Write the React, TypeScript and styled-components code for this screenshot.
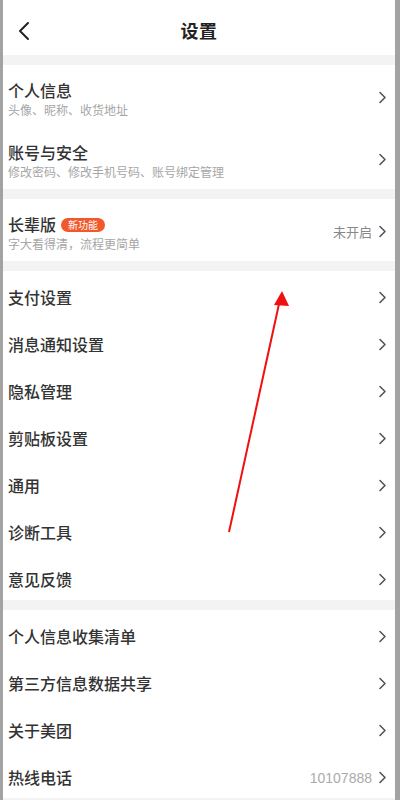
import React from 'react';
import styled, { createGlobalStyle } from 'styled-components';

const GlobalStyle = createGlobalStyle`
  html, body {
    margin: 0;
    padding: 0;
    background: #ffffff;
  }
  body {
    font-family: "Noto Sans CJK SC", "Noto Sans", "Liberation Sans", sans-serif;
    -webkit-font-smoothing: antialiased;
  }
`;

type Item = {
  title: string;
  sub?: string;
  value?: string;
  badge?: string;
};

const accountItems: Item[] = [
  { title: '个人信息', sub: '头像、昵称、收货地址' },
  { title: '账号与安全', sub: '修改密码、修改手机号码、账号绑定管理' },
];

const elderItems: Item[] = [
  { title: '长辈版', sub: '字大看得清，流程更简单', value: '未开启', badge: '新功能' },
];

const settingItems: Item[] = [
  { title: '支付设置' },
  { title: '消息通知设置' },
  { title: '隐私管理' },
  { title: '剪贴板设置' },
  { title: '通用' },
  { title: '诊断工具' },
  { title: '意见反馈' },
];

const aboutItems: Item[] = [
  { title: '个人信息收集清单' },
  { title: '第三方信息数据共享' },
  { title: '关于美团' },
  { title: '热线电话', value: '10107888' },
];

const Chevron: React.FC = () => (
  <svg width="9" height="13" viewBox="0 0 9 13" fill="none">
    <path d="M2 1.5L7 6.5L2 11.5" stroke="#555" strokeWidth="1.6" strokeLinecap="round" strokeLinejoin="round" />
  </svg>
);

const BackIcon: React.FC = () => (
  <svg width="14" height="20" viewBox="0 0 14 20" fill="none">
    <path d="M11 2L3 10L11 18" stroke="#222" strokeWidth="2" strokeLinecap="round" strokeLinejoin="round" />
  </svg>
);

const Row: React.FC<{ item: Item }> = ({ item }) => {
  const tall = !!item.sub;
  return (
    <RowBox $tall={tall}>
      <RowText $tall={tall}>
        <TitleLine>
          <RowTitle>{item.title}</RowTitle>
          {item.badge && <Badge>{item.badge}</Badge>}
        </TitleLine>
        {item.sub && <RowSub>{item.sub}</RowSub>}
      </RowText>
      <RowRight $tall={tall}>
        {item.value && <RowValue $digits={/^\d+$/.test(item.value)}>{item.value}</RowValue>}
        <Chevron />
      </RowRight>
    </RowBox>
  );
};

const App: React.FC = () => {
  return (
    <>
      <GlobalStyle />
      <Screen>
        <Header>
          <BackButton>
            <BackIcon />
          </BackButton>
          <HeaderTitle>设置</HeaderTitle>
        </Header>
        <Section>
          {accountItems.map((it) => (
            <Row key={it.title} item={it} />
          ))}
        </Section>
        <Section>
          {elderItems.map((it) => (
            <Row key={it.title} item={it} />
          ))}
        </Section>
        <Section>
          {settingItems.map((it) => (
            <Row key={it.title} item={it} />
          ))}
        </Section>
        <Section>
          {aboutItems.map((it) => (
            <Row key={it.title} item={it} />
          ))}
        </Section>
        <Arrow width="400" height="800" viewBox="0 0 400 800">
          <line x1="229" y1="532" x2="279" y2="304" stroke="#f01010" strokeWidth="2" />
          <polygon points="282,291 274,305 289,306" fill="#f01010" />
        </Arrow>
      </Screen>
    </>
  );
};

const Screen = styled.div`
  position: relative;
  width: 400px;
  height: 800px;
  overflow: hidden;
  box-sizing: border-box;
  background: #f3f3f3;
  border-left: 3px solid #a3a3a3;
  border-right: 5px solid #a3a3a3;
  display: flex;
  flex-direction: column;
  gap: 10px;
`;

const Header = styled.div`
  position: relative;
  height: 55px;
  flex: none;
  background: #ffffff;
  display: flex;
  align-items: center;
  justify-content: center;
  padding-top: 4px;
  box-sizing: border-box;
`;

const BackButton = styled.div`
  position: absolute;
  left: 14px;
  top: 21px;
  display: flex;
`;

const HeaderTitle = styled.div`
  font-size: 18px;
  font-weight: 700;
  color: #222;
  letter-spacing: 0.5px;
`;

const Section = styled.div`
  background: #ffffff;
  flex: none;
  display: flex;
  flex-direction: column;
`;

const RowBox = styled.div<{ $tall: boolean }>`
  height: ${(p) => (p.$tall ? '62px' : '47px')};
  box-sizing: border-box;
  display: flex;
  align-items: center;
  justify-content: space-between;
  padding: ${(p) => (p.$tall ? '0 8px 0 5px' : '4px 8px 0 5px')};
`;

const RowText = styled.div<{ $tall: boolean }>`
  display: flex;
  flex-direction: column;
  gap: 2px;
  margin-top: ${(p) => (p.$tall ? '6px' : '0')};
`;

const TitleLine = styled.div`
  display: flex;
  align-items: center;
  gap: 5px;
`;

const RowTitle = styled.span`
  font-size: 16px;
  line-height: 20px;
  font-weight: 500;
  color: #333;
`;

const Badge = styled.span`
  height: 14px;
  padding: 0 7px;
  border-radius: 7px;
  background: #f1582c;
  color: #fff;
  font-size: 10px;
  line-height: 14px;
  margin-top: 1px;
`;

const RowSub = styled.span`
  font-size: 12px;
  line-height: 16px;
  color: #a6a6a6;
`;

const RowRight = styled.div<{ $tall: boolean }>`
  display: flex;
  align-items: center;
  gap: 6px;
  padding-top: ${(p) => (p.$tall ? '3px' : '2px')};
`;

const RowValue = styled.span<{ $digits: boolean }>`
  font-size: ${(p) => (p.$digits ? '14px' : '13px')};
  color: ${(p) => (p.$digits ? '#aaa' : '#888')};
  font-family: ${(p) => (p.$digits ? '"Liberation Sans", sans-serif' : 'inherit')};
`;

const Arrow = styled.svg`
  position: absolute;
  left: -3px;
  top: 0;
  pointer-events: none;
`;

export default App;
